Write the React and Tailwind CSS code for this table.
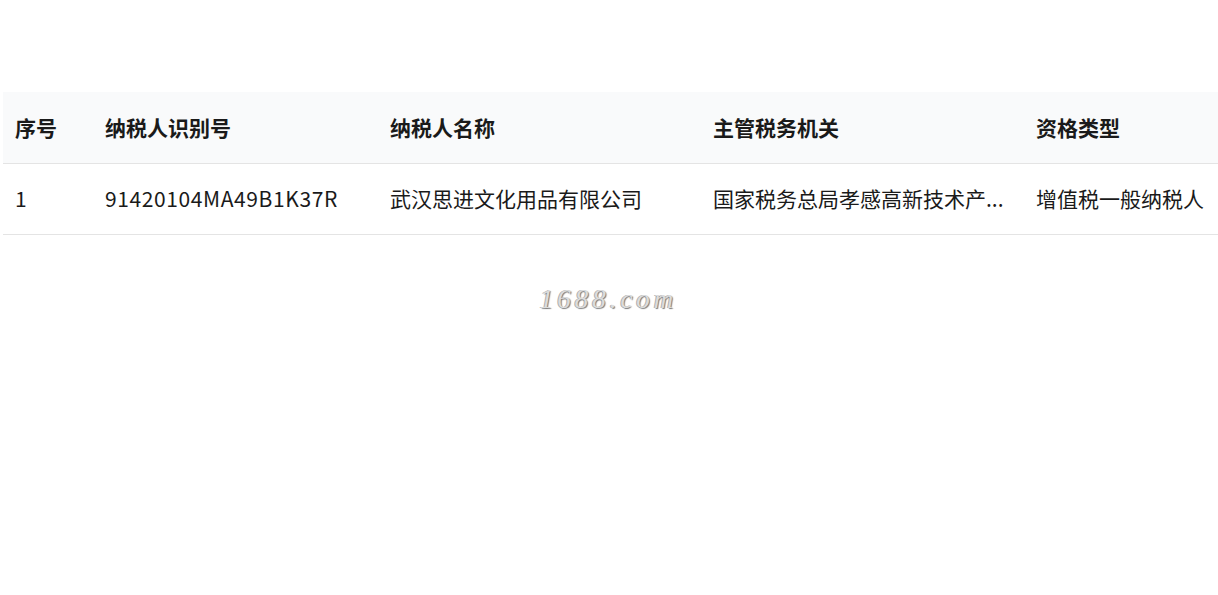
export default function App() {
  const font = { fontFamily: '"Microsoft YaHei", "Noto Sans CJK SC", "Noto Sans", sans-serif' };
  return (
    <div className="w-[1218px] h-[595px] overflow-hidden bg-white" style={font}>
      <div className="pt-[92px] pl-[3px]">
        <table className="table-fixed border-collapse w-[1240px] text-[21px] text-[#1a1a1a]">
          <colgroup>
            <col className="w-[90px]" />
            <col className="w-[285px]" />
            <col className="w-[323px]" />
            <col className="w-[323px]" />
            <col className="w-[219px]" />
          </colgroup>
          <thead>
            <tr className="bg-[#f9fafb] h-[71px] border-b border-[#e4e4e4]">
              <th className="text-left font-bold pl-[12px]">序号</th>
              <th className="text-left font-bold pl-[12px]">纳税人识别号</th>
              <th className="text-left font-bold pl-[12px]">纳税人名称</th>
              <th className="text-left font-bold pl-[12px]">主管税务机关</th>
              <th className="text-left font-bold pl-[12px]">资格类型</th>
            </tr>
          </thead>
          <tbody>
            <tr className="h-[71px] border-b border-[#e4e4e4]">
              <td className="pl-[12px]">1</td>
              <td className="pl-[12px] tracking-[0.6px]">91420104MA49B1K37R</td>
              <td className="pl-[12px]">武汉思进文化用品有限公司</td>
              <td className="pl-[12px] pr-[18px]">
                <div className="overflow-hidden whitespace-nowrap">国家税务总局孝感高新技术产...</div>
              </td>
              <td className="pl-[12px] whitespace-nowrap">增值税一般纳税人</td>
            </tr>
          </tbody>
        </table>
        <div className="flex justify-center pt-[44px] pr-[4px]">
          <span
            className="text-[27px] italic font-normal tracking-[4px] text-[#dcdcdc]"
            style={{ fontFamily: '"Liberation Serif", serif', textShadow: '1px 1px 1px #7a7a7a, -1px 0 0 #b0b0b0' }}
          >
            1688.com
          </span>
        </div>
      </div>
    </div>
  );
}
